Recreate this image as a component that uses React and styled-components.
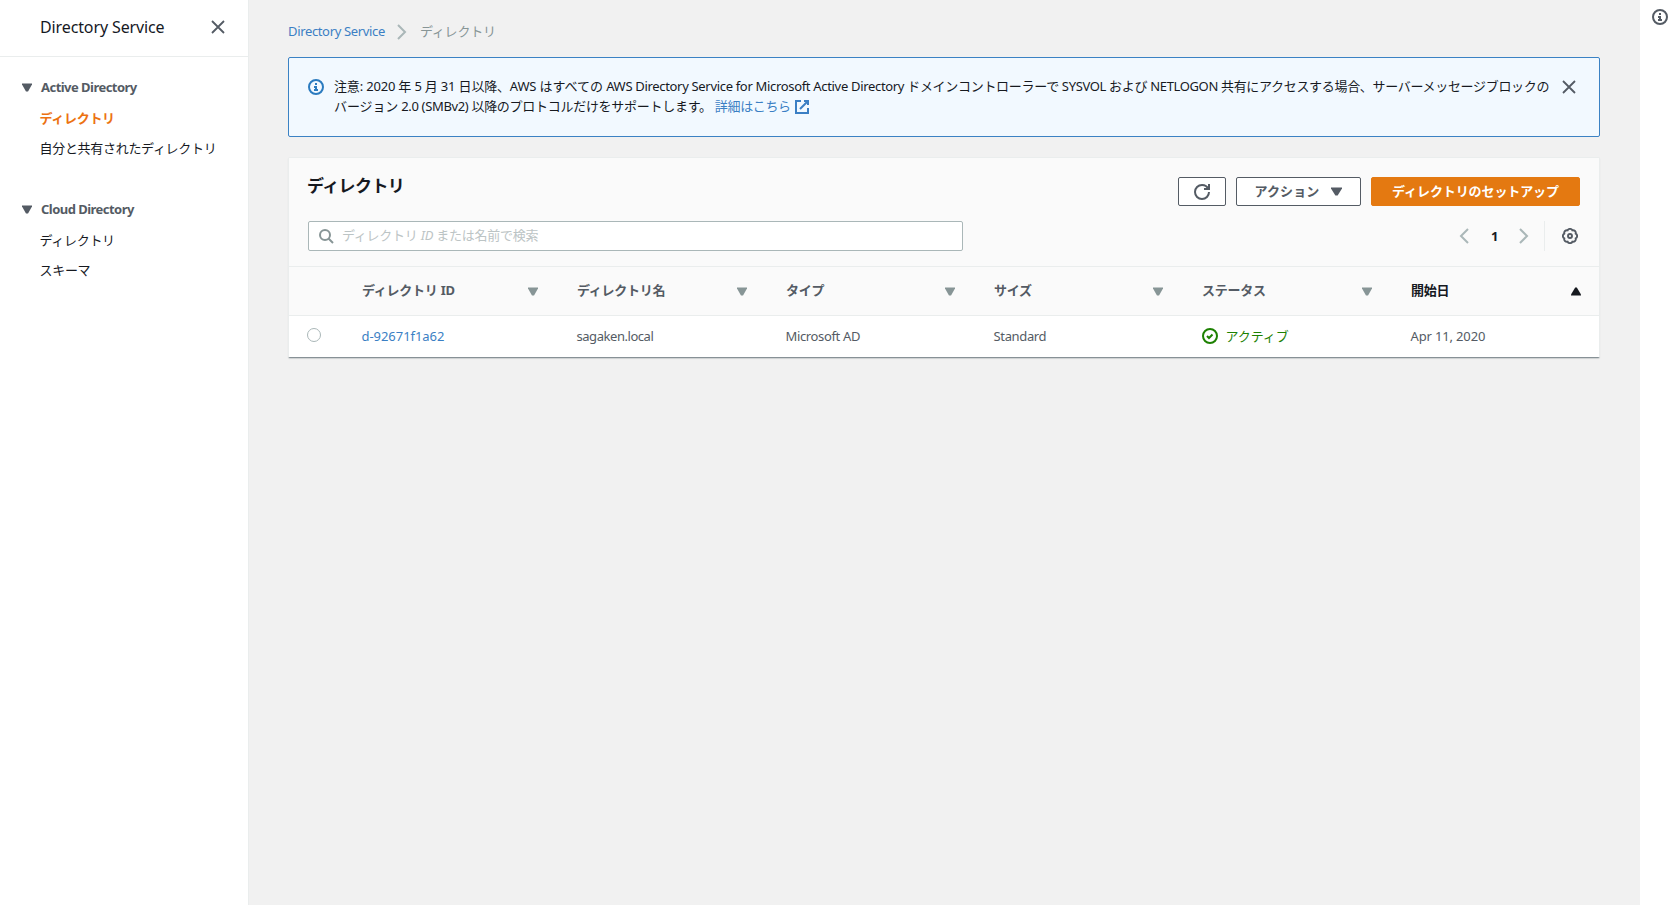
import { useState } from 'react';
import styled, { createGlobalStyle } from 'styled-components';

const GlobalStyle = createGlobalStyle`
    * { box-sizing: border-box; }
    body {
        margin: 0;
        background: #f1f1f1;
        color: #16191f;
        font-family: "Noto Sans", "Noto Sans CJK JP", sans-serif;
        font-size: 13px;
        line-height: 20px;
        letter-spacing: -0.35px;
    }
    a { color: inherit; text-decoration: none; }
    button { font: inherit; letter-spacing: inherit; cursor: pointer; }
`

const Layout = styled.div`
    display: flex;
    height: 905px;
    overflow: hidden;
`

// 左メニュー
const SideNav = styled.nav`
    width: 249px;
    flex: none;
    background: #fff;
    border-right: 1px solid #eaeded;
`

const SideHeader = styled.div`
    display: flex;
    align-items: center;
    justify-content: space-between;
    height: 57px;
    padding: 0 22px 3px 40px;
    border-bottom: 1px solid #eaeded;
    font-size: 16px;
    letter-spacing: -0.12px;
`

const IconButton = styled.button`
    display: flex;
    padding: 0;
    border: 0;
    background: none;
    color: ${ props => props.$color || '#545b64' };
`

const SideSection = styled.div`
    padding: ${ props => props.$first ? '20px' : '31px' } 0 0 22px;
`

const SideTitle = styled.div`
    display: flex;
    align-items: center;
    gap: 9px;
    margin-bottom: 11px;
    color: #545b64;
    font-weight: 700;
    letter-spacing: -0.53px;

    svg { margin-top: 1px; }
`

const SideLink = styled.a`
    display: block;
    height: 20px;
    margin: 0 0 10px 17.5px;
    color: ${ props => props.$active ? '#ec7211' : '#16191f' };
    font-weight: ${ props => props.$active ? 700 : 400 };
    letter-spacing: -0.3px;
`

const Main = styled.main`
    flex: 1;
    padding: 21px 40px 0 39px;
`

const HelpBar = styled.aside`
    display: flex;
    justify-content: center;
    align-items: flex-start;
    width: 40px;
    flex: none;
    padding-top: 9px;
    background: #fff;
`

const Breadcrumb = styled.div`
    display: flex;
    align-items: center;
    height: 20px;
    margin-bottom: 16px;
    color: #879596;

    svg { margin: 1px 10px 0 9px; color: #aab7b8; }
`

const Link = styled.a`
    color: #3b7fc4;
`

const Alert = styled.div`
    display: flex;
    height: 80px;
    padding: 18px 22px 0 19px;
    background: #f2f9ff;
    border: 1px solid #3b82c4;
    border-radius: 2px;
    color: #2b7bbf;

    > svg { margin-top: 3px; flex: none; }
    > button { margin-top: 3px; height: 16px; }
`

const AlertText = styled.div`
    flex: 1;
    margin-left: 10px;
    color: #16191f;
    white-space: nowrap;

    svg { margin-left: 3px; vertical-align: -4px; }
`

const Track = styled.span`
    letter-spacing: ${ props => props.$ls }px;
`

const Panel = styled.section`
    margin-top: 20px;
    height: 201px;
    background: #fff;
    border: 1px solid #eaeded;
    border-bottom: 1px solid #879196;
    border-radius: 2px;
    box-shadow: 0 1px 1px rgba(0, 28, 36, 0.15);
`

const PanelHeader = styled.div`
    height: 109px;
    padding: 19px 19px 0;
    background: #fafafa;
    border-bottom: 1px solid #eaeded;
`

const HeaderRow = styled.div`
    display: flex;
    justify-content: space-between;
    height: ${ props => props.$h }px;
`

const Title = styled.h1`
    margin: -4px 0 0 -1px;
    font-size: 17px;
    line-height: 26px;
    font-weight: 700;
    letter-spacing: -0.6px;
`

const Buttons = styled.div`
    display: flex;
    gap: 10px;
`

const Button = styled.button`
    display: flex;
    align-items: center;
    justify-content: center;
    gap: 12px;
    width: ${ props => props.$w }px;
    height: 29px;
    padding: 0 0 1px;
    border: 1px solid ${ props => props.$primary ? '#e47911' : '#545b64' };
    border-radius: 2px;
    background: ${ props => props.$primary ? '#e47911' : '#fff' };
    color: ${ props => props.$primary ? '#fff' : '#545b64' };
    font-weight: 700;
    letter-spacing: ${ props => props.$primary ? '-0.1px' : '0.1px' };

    svg { margin-top: 1px; }
`

const SearchBox = styled.label`
    display: flex;
    align-items: center;
    gap: 8px;
    width: 655px;
    height: 30px;
    padding-left: 9px;
    background: #fff;
    border: 1px solid #aab7b8;
    border-radius: 2px;
    color: #879596;
`

// inputとplaceholderを同じセルに重ねる
const SearchField = styled.span`
    display: grid;
    flex: 1;
    margin-top: -2px;

    > * { grid-area: 1 / 1; }
`

const SearchInput = styled.input`
    border: 0;
    outline: 0;
    padding: 0;
    background: none;
    font: inherit;
`

const Placeholder = styled.span`
    color: #bcc4c5;
    letter-spacing: -0.25px;
`

const Pager = styled.div`
    display: flex;
    align-items: center;
    height: 30px;
    color: #aab7b8;
`

const PageNumber = styled.span`
    width: 44px;
    padding-left: 1px;
    text-align: center;
    color: #16191f;
    font-weight: 700;
`

const Preferences = styled.div`
    display: flex;
    align-items: center;
    height: 30px;
    margin-left: 12px;
    padding: 0 2px 0 17px;
    border-left: 1px solid #eaeded;
`

const Row = styled.div`
    display: grid;
    grid-template-columns: 53px 215px 209px 208px 208px 209px 208px;
    align-items: center;
    height: ${ props => props.$head ? '49px' : '41px' };
    background: ${ props => props.$head ? '#fafafa' : '#fff' };
    border-bottom: ${ props => props.$head ? '1px solid #eaeded' : '0' };
    color: #545b64;
`

const Cell = styled.div`
    display: flex;
    align-items: center;
    gap: 8px;
    padding: 0 0 1px 19.5px;
    color: ${ props => props.$ok ? '#1d8102' : 'inherit' };
`

const HeadCell = styled.div`
    display: flex;
    align-items: center;
    justify-content: space-between;
    padding: 0 ${ props => props.$sorted ? '18px' : '19px' } 2px 20px;
    color: ${ props => props.$sorted ? '#16191f' : '#545b64' };
    font-weight: 700;
    letter-spacing: -0.25px;

    svg { margin-top: 2px; color: ${ props => props.$sorted ? '#16191f' : '#879596' }; }
`

const Radio = styled.button`
    width: 14px;
    height: 14px;
    margin: 0 0 3px 18px;
    padding: 0;
    border: 1px solid #aab7b8;
    border-radius: 50%;
    background: ${ props => props.$on ? '#0073bb' : '#fff' };
`

const paths = {
    close: <path d="m2 2 12 12M14 2 2 14" />,
    angle: <path d="m4 1 7 7-7 7" />,
    prev: <path d="m12 1-7 7 7 7" />,
    info: <><circle cx="8" cy="8" r="7" /><path d="M8 11V8H6M10 11H6M8 6V4" /></>,
    check: <><circle cx="8" cy="8" r="7" /><path d="m5 8 2 2 3.5-3.5" /></>,
    search: <><circle cx="7" cy="7" r="5" /><path d="m15 15-4.5-4.5" /></>,
    external: <><path d="M10 2h4v4M6 10l8-8" /><path d="M14 9.05V14H2V2h5" /></>,
    refresh: <><path d="M10 5h5V0" /><path d="M15 8a7 7 0 0 1-14 0 7 7 0 0 1 7-7 6.87 6.87 0 0 1 6.3 4" /></>,
    gear: <>
        <path d="M13.7 5.6A2.7 2.7 0 0 1 13.7 10.4 2.7 2.7 0 0 1 10.4 13.7 2.7 2.7 0 0 1 5.6 13.7 2.7 2.7 0 0 1 2.3 10.4 2.7 2.7 0 0 1 2.3 5.6 2.7 2.7 0 0 1 5.6 2.3 2.7 2.7 0 0 1 10.4 2.3 2.7 2.7 0 0 1 13.7 5.6Z" />
        <circle cx="8" cy="8" r="2" />
    </>,
};

function Icon({ name, size = 16, stroke = 2 }) {
    return (
        <svg width={size} height={size} viewBox="0 0 16 16" fill="none" stroke="currentColor" strokeWidth={stroke}>
            {paths[name]}
        </svg>
    )
}

function Caret({ up, w = 10 }) {
    return (
        <svg width={w} height="9" viewBox="0 0 10 9" preserveAspectRatio="none" fill="currentColor">
            <path d={up ? 'M0 8.5v-1L4.2.5h1.6L10 7.5v1Z' : 'M0 .5h10v1L6 8.5H4L0 1.5Z'} />
        </svg>
    )
}

const menus = [
    { title: 'Active Directory', items: ['ディレクトリ', '自分と共有されたディレクトリ'] },
    { title: 'Cloud Directory', items: ['ディレクトリ', 'スキーマ'] },
];

const columns = ['ディレクトリ ID', 'ディレクトリ名', 'タイプ', 'サイズ', 'ステータス', '開始日'];

const directories = [
    { id: 'd-92671f1a62', name: 'sagaken.local', type: 'Microsoft AD', size: 'Standard', status: 'アクティブ', date: 'Apr 11, 2020' },
];

function App() {

    let [selected, setSelected] = useState(null);
    let [keyword, setKeyword] = useState('');

    return (
        <Layout>
            <GlobalStyle />
            <SideNav>
                <SideHeader>
                    Directory Service
                    <IconButton><Icon name="close" stroke={1.8} /></IconButton>
                </SideHeader>
                {
                    menus.map((menu, i) => (
                        <SideSection key={i} $first={i == 0}>
                            <SideTitle><Caret />{menu.title}</SideTitle>
                            {
                                menu.items.map((item, j) => (
                                    <SideLink key={j} href="#" $active={i == 0 && j == 0}>{item}</SideLink>
                                ))
                            }
                        </SideSection>
                    ))
                }
            </SideNav>

            <Main>
                <Breadcrumb>
                    <Link href="#">Directory Service</Link>
                    <Icon name="angle" />
                    <Track $ls={-0.2}>ディレクトリ</Track>
                </Breadcrumb>

                <Alert>
                    <Icon name="info" />
                    <AlertText>
                        <Track $ls={-0.18}>注意: 2020 年 5 月 31 日以降、AWS </Track><Track $ls={0}>はすべての</Track> <Track $ls={-0.32}>AWS Directory Service for Microsoft Active Directory</Track> <Track $ls={-0.3}>ドメインコントローラーで</Track> SYSVOL <Track $ls={-0.3}>および</Track> <Track $ls={-0.35}>NETLOGON</Track> <Track $ls={-0.32}>共有にアクセスする場合、サーバーメッセージブロックの</Track>
                        <br/>
                        <Track $ls={-0.1}>バージョン</Track> 2.0 (SMBv2) <Track $ls={-0.28}>以降のプロトコルだけをサポートします。</Track> <Link href="#">詳細はこちら<Icon name="external" /></Link>
                    </AlertText>
                    <IconButton><Icon name="close" stroke={1.8} /></IconButton>
                </Alert>

                <Panel>
                    <PanelHeader>
                        <HeaderRow $h={44}>
                            <Title>ディレクトリ</Title>
                            <Buttons>
                                <Button $w={48}><Icon name="refresh" /></Button>
                                <Button $w={125}>アクション <Caret w={11} /></Button>
                                <Button $w={209} $primary>ディレクトリのセットアップ</Button>
                            </Buttons>
                        </HeaderRow>
                        <HeaderRow $h={30}>
                            <SearchBox>
                                <Icon name="search" />
                                <SearchField>
                                    { keyword == '' && <Placeholder>ディレクトリ <i>ID</i> または名前で検索</Placeholder> }
                                    <SearchInput value={keyword} onChange={(e) => setKeyword(e.target.value)} />
                                </SearchField>
                            </SearchBox>
                            <Pager>
                                <Icon name="prev" />
                                <PageNumber>1</PageNumber>
                                <Icon name="angle" />
                                <Preferences>
                                    <IconButton><Icon name="gear" stroke={1.9} /></IconButton>
                                </Preferences>
                            </Pager>
                        </HeaderRow>
                    </PanelHeader>

                    <Row $head>
                        <span />
                        {
                            columns.map((name, i) => (
                                <HeadCell key={i} $sorted={i == 5}>{name}<Caret up={i == 5} /></HeadCell>
                            ))
                        }
                    </Row>
                    {
                        directories.map((d) => (
                            <Row key={d.id}>
                                <Radio $on={selected == d.id} onClick={() => setSelected(d.id)} />
                                <Cell><Link href="#"><Track $ls={-0.05}>{d.id}</Track></Link></Cell>
                                <Cell><Track $ls={-0.45}>{d.name}</Track></Cell>
                                <Cell>{d.type}</Cell>
                                <Cell>{d.size}</Cell>
                                <Cell $ok><Icon name="check" /><Track $ls={-0.1}>{d.status}</Track></Cell>
                                <Cell><Track $ls={-0.15}>{d.date}</Track></Cell>
                            </Row>
                        ))
                    }
                </Panel>
            </Main>

            <HelpBar>
                <IconButton><Icon name="info" /></IconButton>
            </HelpBar>
        </Layout>
    )
}

export default App;
